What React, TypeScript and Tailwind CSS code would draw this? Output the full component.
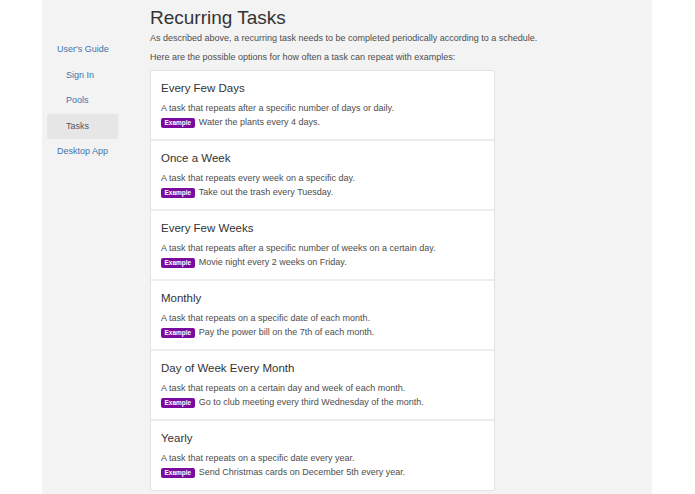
const tasks = [
  {
    title: "Every Few Days",
    desc: "A task that repeats after a specific number of days or daily.",
    example: "Water the plants every 4 days.",
  },
  {
    title: "Once a Week",
    desc: "A task that repeats every week on a specific day.",
    example: "Take out the trash every Tuesday.",
  },
  {
    title: "Every Few Weeks",
    desc: "A task that repeats after a specific number of weeks on a certain day.",
    example: "Movie night every 2 weeks on Friday.",
  },
  {
    title: "Monthly",
    desc: "A task that repeats on a specific date of each month.",
    example: "Pay the power bill on the 7th of each month.",
  },
  {
    title: "Day of Week Every Month",
    desc: "A task that repeats on a certain day and week of each month.",
    example: "Go to club meeting every third Wednesday of the month.",
  },
  {
    title: "Yearly",
    desc: "A task that repeats on a specific date every year.",
    example: "Send Christmas cards on December 5th every year.",
  },
];

function SideLink({ label, sub, active }: { label: string; sub?: boolean; active?: boolean }) {
  return (
    <li
      className={
        "h-[25.5px] w-[71px] flex items-center rounded-[2px] text-[9px] " +
        (sub ? "pl-[19px] " : "pl-[10px] ") +
        (active ? "bg-[#e6e6e6] text-[#555]" : "text-[#3f73ad]")
      }
    >
      {label}
    </li>
  );
}

export default function App() {
  return (
    <div className="min-h-[494px] bg-white font-['Liberation_Sans',Arial,sans-serif]">
      <div className="ml-[42px] w-[610px] min-h-[494px] bg-[#f3f3f3] flex">
        <nav className="w-[108px] shrink-0 pl-[5px] pt-[37px]">
          <ul>
            <SideLink label="User's Guide" />
            <SideLink label="Sign In" sub />
            <SideLink label="Pools" sub />
            <SideLink label="Tasks" sub active />
            <SideLink label="Desktop App" />
          </ul>
        </nav>
        <main className="flex-1 pt-[7px]">
          <h2 className="text-[19px] leading-[21px] text-[#333]">Recurring Tasks</h2>
          <p className="mt-[4px] text-[9px] leading-[13px] text-[#4d4d4d]">
            As described above, a recurring task needs to be completed periodically according to a schedule.
          </p>
          <p className="mt-[6px] text-[9px] leading-[13px] text-[#4d4d4d]">
            Here are the possible options for how often a task can repeat with examples:
          </p>
          <div className="mt-[6px] w-[345px] bg-white border border-[#e2e2e2] rounded-[2px]">
            {tasks.map((t, i) => (
              <div
                key={t.title}
                className={
                  "px-[10px] pt-[10px] " +
                  (i < tasks.length - 1 ? "h-[70px] border-b-2 border-[#ededed]" : "h-[69px]")
                }
              >
                <h4 className="text-[11.5px] leading-[14px] text-[#333]">{t.title}</h4>
                <p className="mt-[7px] text-[9px] leading-[13px] text-[#4d4d4d]">{t.desc}</p>
                <p className="mt-[1px] flex items-center h-[14px] text-[9px] text-[#4d4d4d]">
                  <span className="mr-[4px] h-[10px] px-[3.5px] flex items-center rounded-[2px] bg-[#7b0a9e] text-white font-bold text-[6.5px]">
                    Example
                  </span>
                  {t.example}
                </p>
              </div>
            ))}
          </div>
        </main>
      </div>
    </div>
  );
}
